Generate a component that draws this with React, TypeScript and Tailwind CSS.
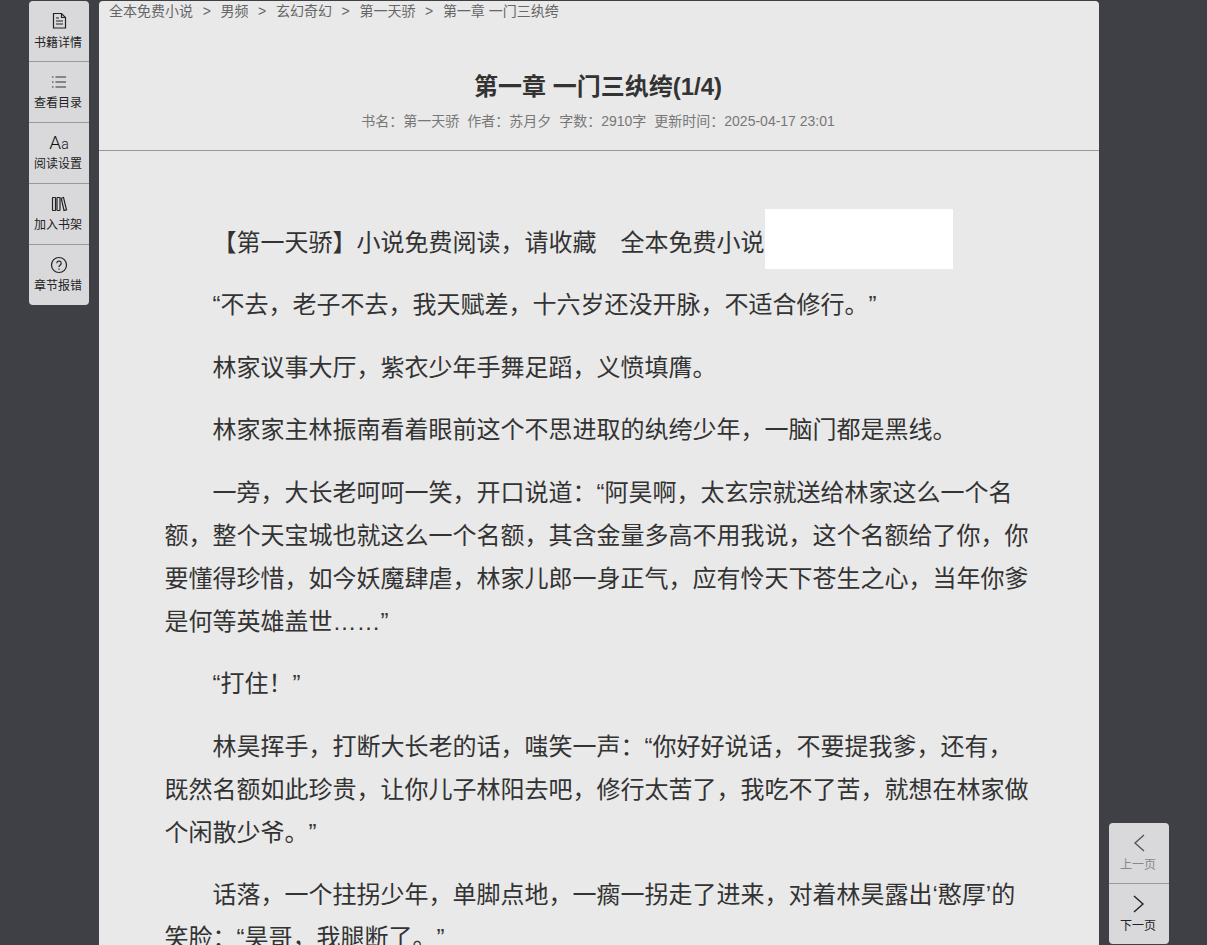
import React from "react";

function Btn({ icon, label, muted, border, h = "h-[61px]", tall }: { icon: React.ReactNode; label: string; muted?: boolean; border?: boolean; h?: string; tall?: boolean }) {
  return (
    <div className={`flex ${h} flex-col items-center pt-[10px] ${border ? "border-b border-[#999]" : ""} ${muted ? "text-[#888]" : "text-[#222]"}`}>
      <div className="flex h-[20px] w-[20px] items-center justify-center">{icon}</div>
      <span className={`${tall ? "mt-[2px]" : "mt-[1px]"} -ml-[2px] text-[12px] leading-[20px]`}>{label}</span>
    </div>
  );
}

const S = { fill: "none", stroke: "currentColor", strokeWidth: 1.2 } as const;

const DocIcon = (
  <svg width="18" height="18" viewBox="0 0 18 18" {...S}>
    <path d="M3.500 1.500h8l4 4v10.500h-12z" />
    <path d="M11.500 1.500v4h4M6 9h7M6 12h7M6 6h3" />
  </svg>
);
const ListIcon = (
  <svg width="18" height="18" viewBox="0 0 18 18" {...S} className="text-[#333]">
    <path d="M5.500 4h10.500M5.500 9h10.500M5.500 14h10.500" />
    <path d="M2 4h1.500M2 9h1.500M2 14h1.500" />
  </svg>
);
const AaIcon = (
  <span className="font-['Roboto',sans-serif] text-[19px] leading-[20px] font-light text-[#111]">
    A<span className="text-[14px]">a</span>
  </span>
);
const BooksIcon = (
  <svg width="18" height="18" viewBox="0 0 18 18" {...S}>
    <rect x="2.500" y="2.500" width="3" height="13" rx="0.500" />
    <rect x="7" y="2.500" width="3" height="13" rx="0.500" />
    <path d="M11.200 3.200l2.300-.7 3 12.300-2.500.7z" />
  </svg>
);
const HelpIcon = (
  <svg width="18" height="18" viewBox="0 0 18 18" {...S}>
    <circle cx="9" cy="9" r="7.500" />
    <path d="M6.800 7.200a2.200 2.200 0 1 1 3.400 1.900c-.8.500-1.200 1-1.200 1.900" />
    <path d="M9 12.600v1.200" />
  </svg>
);
const Prev = (
  <svg width="14" height="20" viewBox="0 0 14 20" {...S} strokeWidth={1.4} className="text-[#555]">
    <path d="M12 2L3 10l9 8" />
  </svg>
);
const Next = (
  <svg width="14" height="20" viewBox="0 0 14 20" {...S} strokeWidth={1.4}>
    <path d="M2 2l9 8-9 8" />
  </svg>
);

const crumbs = ["全本免费小说", "男频", "玄幻奇幻", "第一天骄"];

const paras = [
  "“不去，老子不去，我天赋差，十六岁还没开脉，不适合修行。”",
  "林家议事大厅，紫衣少年手舞足蹈，义愤填膺。",
  "林家家主林振南看着眼前这个不思进取的纨绔少年，一脑门都是黑线。",
  "一旁，大长老呵呵一笑，开口说道：“阿昊啊，太玄宗就送给林家这么一个名额，整个天宝城也就这么一个名额，其含金量多高不用我说，这个名额给了你，你要懂得珍惜，如今妖魔肆虐，林家儿郎一身正气，应有怜天下苍生之心，当年你爹是何等英雄盖世……”",
  "“打住！”",
  "林昊挥手，打断大长老的话，嗤笑一声：“你好好说话，不要提我爹，还有，既然名额如此珍贵，让你儿子林阳去吧，修行太苦了，我吃不了苦，就想在林家做个闲散少爷。”",
  "话落，一个拄拐少年，单脚点地，一瘸一拐走了进来，对着林昊露出‘憨厚’的笑脸：“昊哥，我腿断了。”",
];

export default function App() {
  return (
    <div className="flex h-screen items-start gap-[10px] overflow-hidden bg-[#3f4046] pl-[29px] pt-px">
      <div className="w-[60px] shrink-0 rounded-[4px] bg-[#d9d9db] font-['Liberation_Sans','Noto_Sans_CJK_SC',sans-serif]">
        <Btn icon={DocIcon} label="书籍详情" border tall />
        <Btn icon={ListIcon} label="查看目录" border />
        <Btn icon={AaIcon} label="阅读设置" border />
        <Btn icon={BooksIcon} label="加入书架" border />
        <Btn icon={HelpIcon} label="章节报错" h="h-[60px]" />
      </div>

      <main className="w-[1000px] shrink-0 rounded-t-[4px] bg-[#e9e9e9] font-['Liberation_Sans','Noto_Sans_CJK_SC',sans-serif] text-[#333] [text-spacing-trim:space-all]">
        <nav className="flex h-[20px] items-center pl-[10px] text-[14px] leading-[20px] text-[#666]">
          {crumbs.map((c) => (
            <React.Fragment key={c}>
              <span>{c}</span>
              <span className="mx-[9.650px]">&gt;</span>
            </React.Fragment>
          ))}
          <span>第一章 一门三纨绔</span>
        </nav>
        <header className="h-[130px] border-b border-[#999] pr-[2px] pt-[47px] text-center">
          <h1 className="text-[24px] font-bold leading-[38px] text-[#333]">第一章 一门三纨绔(1/4)</h1>
          <p className="mt-[5px] text-[14px] leading-[20px] text-[#777]">
            <span>书名：第一天骄</span>
            <span className="ml-[8px]">作者：苏月夕</span>
            <span className="ml-[8px]">字数：2910字</span>
            <span className="ml-[8px]">更新时间：2025-04-17 23:01</span>
          </p>
        </header>
        <article className="pl-[65.500px] pr-[70.500px] pt-[58px] text-[24px] leading-[43px] text-[#333]">
          <p className="mb-[14px] flex h-[60px] items-center pl-[48px]">
            <span className="pt-[6px]">【第一天骄】小说免费阅读，请收藏　全本免费小说</span>
            <span className="h-[60px] w-[188px] shrink-0 bg-white" />
          </p>
          {paras.map((p) => (
            <p key={p} className="mb-[19.500px] indent-[48px]">
              {p}
            </p>
          ))}
        </article>
      </main>

      <div className="mb-px w-[60px] shrink-0 self-end rounded-[4px] bg-[#d9d9db] font-['Liberation_Sans','Noto_Sans_CJK_SC',sans-serif]">
        <Btn icon={Prev} label="上一页" muted border tall />
        <Btn icon={Next} label="下一页" h="h-[60px]" tall />
      </div>
    </div>
  );
}
